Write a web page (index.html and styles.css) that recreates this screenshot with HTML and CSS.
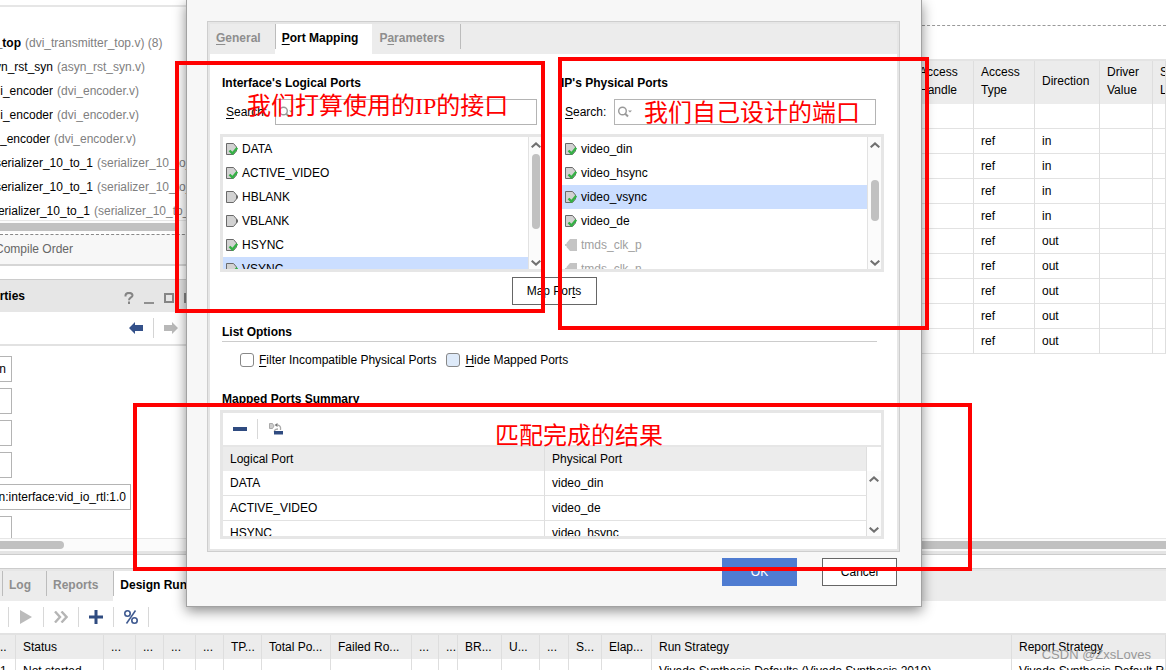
FILE: index.html
```html
<!DOCTYPE html>
<html lang="en">
<head>
<meta charset="utf-8">
<title>Port Mapping</title>
<link rel="stylesheet" href="styles.css">
</head>
<body>
<svg class="sprite" aria-hidden="true">
  <symbol id="port" viewBox="0 0 12 12"><path d="M.5 .5H7.500L10.500 4V8L7.500 11.500H.5Z" fill="#d2d2d2" stroke="#6a6a6a"/><path d="M10 4.500H12V7.500H10Z" fill="#6a6a6a"/></symbol>
  <symbol id="port-ok" viewBox="0 0 12 12"><path d="M.5 .5H7.500L10.500 4V8L7.500 11.500H.5Z" fill="#d2d2d2" stroke="#6a6a6a"/><path d="M3.500 7.500L6.500 10.500L11.300 4.800" fill="none" stroke="#35b045" stroke-width="2.400"/></symbol>
  <symbol id="port-off" viewBox="0 0 12 12"><path d="M12 0H5L1.500 4V8L5 12H12Z" fill="#c4c4c4"/><path d="M0 5H2V7H0Z" fill="#c4c4c4"/></symbol>
  <symbol id="up" viewBox="0 0 10 6"><path d="M.7 5.300L5 1.400L9.300 5.300" fill="none" stroke="#707070" stroke-width="2"/></symbol>
  <symbol id="down" viewBox="0 0 10 6"><path d="M.7 .7L5 4.600L9.300 .7" fill="none" stroke="#707070" stroke-width="2"/></symbol>
  <symbol id="lens" viewBox="0 0 14 12"><circle cx="4.500" cy="5" r="3.800" fill="none" stroke="#999" stroke-width="1.400"/><path d="M7 7.500L10 10.500" stroke="#999" stroke-width="2"/><path d="M10 4.500H14L12 6.500Z" fill="#999"/></symbol>
  <symbol id="arrow-left" viewBox="0 0 14 12"><path d="M0 6L6 0V3H14V9H6V12Z"/></symbol>
  <symbol id="arrow-right" viewBox="0 0 14 12"><path d="M14 6L8 0V3H0V9H8V12Z"/></symbol>
</svg>

<main class="app">
  <div class="workspace">
    <section class="side">
      <ul class="tree">
        <li><b class="name depth-0">_top</b><span>(dvi_transmitter_top.v) (8)</span></li>
        <li><span class="name depth-1">yn_rst_syn</span><span>(asyn_rst_syn.v)</span></li>
        <li><span class="name depth-1">i_encoder</span><span>(dvi_encoder.v)</span></li>
        <li><span class="name depth-1">i_encoder</span><span>(dvi_encoder.v)</span></li>
        <li><span class="name depth-2">_encoder</span><span>(dvi_encoder.v)</span></li>
        <li><span class="name depth-3">serializer_10_to_1</span><span>(serializer_10_to_1.v)</span></li>
        <li><span class="name depth-3">serializer_10_to_1</span><span>(serializer_10_to_1.v)</span></li>
        <li><span class="name depth-4">serializer_10_to_1</span><span>(serializer_10_to_1.v)</span></li>
      </ul>
      <div class="hscroll tree-scroll"><div class="bar bar-tree"></div></div>
      <div class="order"><span class="order-label">Compile Order</span></div>
      <header class="props-head">
        <h2 class="props-title">erties</h2>
        <div class="props-tools">
          <svg width="10" height="12" viewBox="0 0 10 12"><path d="M1.500 4.500V3.500C1.500 0 8.500 0 8.500 3.500C8.500 5.500 5 5.500 5 8.300M5 9.500V12" fill="none" stroke="#858585" stroke-width="2"/></svg>
          <svg width="10" height="12" viewBox="0 0 10 12"><path d="M0 10H10V12H0Z" fill="#909090"/></svg>
          <svg width="10" height="12" viewBox="0 0 10 12"><path d="M1 2H9V10H1Z" fill="none" stroke="#858585" stroke-width="2"/></svg>
          <svg width="10" height="12" viewBox="0 0 10 12"><path d="M1 2H9V10H1Z" fill="none" stroke="#858585" stroke-width="2"/></svg>
        </div>
      </header>
      <div class="nav">
        <button class="icon-btn nav-back" aria-label="Back"><svg width="14" height="12"><use href="#arrow-left"/></svg></button>
        <button class="icon-btn nav-next" aria-label="Forward"><svg width="14" height="12"><use href="#arrow-right"/></svg></button>
      </div>
      <form class="fields">
        <input aria-label="Name" value="n" readonly>
        <input aria-label="Mode" readonly>
        <input aria-label="Type" readonly>
        <input aria-label="Version" readonly>
        <input aria-label="Definition" class="wide" value="n:interface:vid_io_rtl:1.0" readonly>
        <input aria-label="Vendor" readonly>
      </form>
      <div class="hscroll"><div class="bar bar-props"></div></div>
    </section>

    <section class="ports">
      <table class="grid ports-table">
        <colgroup><col class="p-handle"><col class="p-type"><col class="p-dir"><col class="p-driver"><col></colgroup>
        <thead><tr><th>Access Handle</th><th>Access Type</th><th>Direction</th><th>Driver Value</th><th>Size Left</th></tr></thead>
        <tbody>
          <tr><td></td><td></td><td></td><td></td><td></td></tr>
          <tr><td></td><td>ref</td><td>in</td><td></td><td></td></tr>
          <tr><td></td><td>ref</td><td>in</td><td></td><td></td></tr>
          <tr><td></td><td>ref</td><td>in</td><td></td><td></td></tr>
          <tr><td></td><td>ref</td><td>in</td><td></td><td></td></tr>
          <tr><td></td><td>ref</td><td>out</td><td></td><td></td></tr>
          <tr><td></td><td>ref</td><td>out</td><td></td><td></td></tr>
          <tr><td></td><td>ref</td><td>out</td><td></td><td></td></tr>
          <tr><td></td><td>ref</td><td>out</td><td></td><td></td></tr>
          <tr><td></td><td>ref</td><td>out</td><td></td><td></td></tr>
        </tbody>
      </table>
      <div class="hscroll"><div class="bar"></div></div>
    </section>
  </div>

  <section class="runs">
    <nav class="tabs runs-tabs">
      <button class="tab">Log</button>
      <button class="tab">Reports</button>
      <button class="tab active">Design Runs</button>
    </nav>
    <div class="runs-tools">
      <button class="icon-btn" aria-label="Run"><svg width="12" height="14" viewBox="0 0 12 14"><path d="M0 0L12 7L0 14Z" fill="#bbb"/></svg></button>
      <button class="icon-btn" aria-label="Next step"><svg width="14" height="12" viewBox="0 0 14 12"><path d="M1 .5L6 6L1 11.500M7.500 .5L12.500 6L7.500 11.500" fill="none" stroke="#b5b5b5" stroke-width="2.400"/></svg></button>
      <button class="icon-btn" aria-label="Create runs"><svg width="14" height="14" viewBox="0 0 14 14"><path d="M7 0V14M0 7H14" stroke="#2f4b80" stroke-width="3"/></svg></button>
      <button class="icon-btn" aria-label="Show percentage"><svg width="14" height="14" viewBox="0 0 14 14"><path d="M11.500 .5L2.500 13.500" stroke="#3f5a90" stroke-width="1.500"/><circle cx="3.500" cy="3.500" r="2.700" fill="none" stroke="#3f5a90" stroke-width="1.600"/><circle cx="10.500" cy="10.500" r="2.700" fill="none" stroke="#3f5a90" stroke-width="1.600"/></svg></button>
    </div>
    <table class="grid runs-table">
      <colgroup><col class="r-first"><col class="r-status"><col class="r-32"><col class="r-28"><col class="r-32"><col class="r-28"><col class="r-38"><col class="r-power"><col class="r-failed"><col class="r-27"><col class="r-19"><col class="r-44"><col class="r-38"><col class="r-29"><col class="r-33"><col class="r-50"><col class="r-strategy"><col></colgroup>
      <thead><tr><th>..</th><th>Status</th><th>...</th><th>...</th><th>...</th><th>...</th><th>TP...</th><th>Total Po...</th><th>Failed Ro...</th><th>...</th><th>...</th><th>BR...</th><th>U...</th><th>...</th><th>S...</th><th>Elap...</th><th>Run Strategy</th><th>Report Strategy</th></tr></thead>
      <tbody><tr><td>1</td><td>Not started</td><td></td><td></td><td></td><td></td><td></td><td></td><td></td><td></td><td></td><td></td><td></td><td></td><td></td><td></td><td>Vivado Synthesis Defaults (Vivado Synthesis 2019)</td><td>Vivado Synthesis Default Reports</td></tr></tbody>
    </table>
  </section>
</main>

<div class="dialog" role="dialog" aria-label="Edit interface">
  <div class="panel">
    <nav class="tabs">
      <button class="tab"><u>G</u>eneral</button>
      <button class="tab active"><u>P</u>ort Mapping</button>
      <button class="tab">P<u>a</u>rameters</button>
      <span class="tab-end"></span>
    </nav>
    <div class="content">
      <div class="columns">
        <section class="column">
          <h3>Interface's Logical Ports</h3>
          <div class="search">
            <label for="find-logical"><u>S</u>earch:</label>
            <div class="search-box"><svg width="14" height="12"><use href="#lens"/></svg><input id="find-logical" type="text"></div>
          </div>
          <div class="frame list">
            <ul>
              <li><svg><use href="#port-ok"/></svg>DATA</li>
              <li><svg><use href="#port-ok"/></svg>ACTIVE_VIDEO</li>
              <li><svg><use href="#port"/></svg>HBLANK</li>
              <li><svg><use href="#port"/></svg>VBLANK</li>
              <li><svg><use href="#port-ok"/></svg>HSYNC</li>
              <li class="selected"><svg><use href="#port-ok"/></svg>VSYNC</li>
            </ul>
            <div class="vscroll"><svg><use href="#up"/></svg><div class="lane"><div class="thumb thumb-logical"></div></div><svg><use href="#down"/></svg></div>
          </div>
        </section>
        <section class="column">
          <h3>IP's Physical Ports</h3>
          <div class="search">
            <label for="find-physical"><u>S</u>earch:</label>
            <div class="search-box"><svg width="14" height="12"><use href="#lens"/></svg><input id="find-physical" type="text"></div>
          </div>
          <div class="frame list">
            <ul>
              <li><svg><use href="#port-ok"/></svg>video_din</li>
              <li><svg><use href="#port-ok"/></svg>video_hsync</li>
              <li class="selected"><svg><use href="#port-ok"/></svg>video_vsync</li>
              <li><svg><use href="#port-ok"/></svg>video_de</li>
              <li class="off"><svg><use href="#port-off"/></svg>tmds_clk_p</li>
              <li class="off"><svg><use href="#port-off"/></svg>tmds_clk_n</li>
            </ul>
            <div class="vscroll"><svg><use href="#up"/></svg><div class="lane"><div class="thumb thumb-physical"></div></div><svg><use href="#down"/></svg></div>
          </div>
        </section>
      </div>
      <button class="btn map">Map Por<u>t</u>s</button>
      <h3 class="ruled">List Options</h3>
      <div class="options">
        <input type="checkbox" id="filter"><label for="filter"><u>F</u>ilter Incompatible Physical Ports</label>
        <input type="checkbox" id="hide" class="hot"><label for="hide"><u>H</u>ide Mapped Ports</label>
      </div>
      <h3>Mapped Ports Summary</h3>
      <div class="frame summary">
        <div class="summary-tools">
          <button class="icon-btn" aria-label="Remove"><svg width="14" height="4"><path d="M0 0H14V4H0Z" fill="#2f4b80"/></svg></button>
          <button class="icon-btn" aria-label="Remove all"><svg width="14" height="12" viewBox="0 0 14 12"><path d="M.5 .5H3.500L5 3L3.500 5.500H.5Z" fill="#ccc" stroke="#aaa"/><path d="M8.500 0V4L5.500 2Z" fill="#777"/><path d="M8 2C11 2 12 4 11.500 7M6 10.500C4.500 8 5.500 6 9 6" fill="none" stroke="#aaa" stroke-width="1.300"/><path d="M5 8H14V11.500H5Z" fill="#2f4b80"/></svg></button>
        </div>
        <div class="summary-body">
          <table class="grid map-table">
            <thead><tr><th>Logical Port</th><th>Physical Port</th></tr></thead>
            <tbody>
              <tr><td>DATA</td><td>video_din</td></tr>
              <tr><td>ACTIVE_VIDEO</td><td>video_de</td></tr>
              <tr><td>HSYNC</td><td>video_hsync</td></tr>
            </tbody>
          </table>
          <div class="vscroll"><svg><use href="#up"/></svg><div class="lane"></div><svg><use href="#down"/></svg></div>
        </div>
      </div>
    </div>
  </div>
  <footer class="actions">
    <button class="btn primary">OK</button>
    <button class="btn">Cancel</button>
  </footer>
</div>

<div class="mark mark-logical"></div>
<div class="mark mark-physical"></div>
<div class="mark mark-result"></div>
<p class="note note-logical" lang="zh-CN">我们打算使用的<span class="latin">IP</span>的接口</p>
<p class="note note-physical" lang="zh-CN">我们自己设计的端口</p>
<p class="note note-result" lang="zh-CN">匹配完成的结果</p>
<p class="watermark">CSDN @ZxsLoves</p>
</body>
</html>
```

FILE: styles.css
```css
* { box-sizing: border-box; }

body {
  position: relative;
  margin: 0;
  height: 100vh;
  overflow: hidden;
  background: #fff;
  color: #000;
  font: 12px/24px "Liberation Sans", Arial, sans-serif;
}

ul, h2, h3, p { margin: 0; padding: 0; list-style: none; }
h2, h3 { font-size: 12px; font-weight: bold; }
button, input { margin: 0; font: inherit; color: inherit; border-radius: 0; }
button { padding: 0; border: 0; background: none; }
svg { display: block; flex: none; }
.sprite { position: absolute; width: 0; height: 0; }
u { text-underline-offset: 2px; text-decoration-skip-ink: none; }

.icon-btn { display: flex; align-items: center; justify-content: center; }

/* Shared tables */
.grid { width: 100%; border-collapse: separate; border-spacing: 0; table-layout: fixed; }
.grid th, .grid td {
  padding: 0 7px;
  border-right: 1px solid #dedede;
  font-weight: normal;
  text-align: left;
  white-space: nowrap;
  overflow: hidden;
}
.grid th { background: #ececec; }
.grid td { height: 25px; border-bottom: 1px solid #e2e2e2; }

/* Tabs */
.tabs { display: flex; background: #ececec; }
.tab {
  height: 30px;
  padding: 0 15px 2px 7px;
  color: #8e8e8e;
  font-weight: bold;
  white-space: nowrap;
  background: linear-gradient(#bcbcbc, #bcbcbc) no-repeat left top / 1px 25px;
}
.tab.active { padding-right: 14px; color: #000; background-color: #fff; }
.tab.active + .tab { background-image: none; }
.tab-end { width: 1px; height: 25px; background: #bcbcbc; }

/* Main window */
.workspace { display: grid; grid-template-columns: 200px 1fr 254px; border-bottom: 1px solid #ccc; padding-bottom: 13px; }
.side { overflow: hidden; padding-top: 5px; }
.tree { border-top: 2px solid #e6e6e6; padding-top: 24px; }
.tree li { display: flex; gap: 4px; color: #808080; white-space: nowrap; }
.name { display: flex; flex: none; justify-content: flex-end; overflow: hidden; color: #000; }
.depth-0 { width: 21px; }
.depth-1 { width: 53px; }
.depth-2 { width: 50px; }
.depth-3 { width: 93px; }
.depth-4 { width: 90px; }

.hscroll { height: 13px; padding: 2px 0; background: #fbfbfb; border-top: 1px solid #e6e6e6; }
.tree-scroll { margin-top: -3px; }
.bar { height: 8px; background: #c1c1c1; }
.bar-tree { width: 177px; }
.bar-props { width: 64px; border-radius: 0 4px 4px 0; }

.order {
  margin-top: 1px;
  border-top: 1px dashed #888;
  border-bottom: 2px solid #d6d6d6;
  padding: 2px 0 3px;
  background: #f7f7f7;
  color: #666;
}
.order-label { display: flex; justify-content: flex-end; width: 73px; white-space: nowrap; }

.props-head {
  display: flex;
  align-items: center;
  height: 33px;
  margin-top: 13px;
  border-top: 1px solid #ccc;
  background: #e6e6e6;
}
.props-title { display: flex; flex: none; justify-content: flex-end; width: 25px; overflow: hidden; }
.props-tools { display: flex; gap: 10px; margin-left: 99px; padding-top: 4px; }
.nav { display: flex; align-items: center; height: 34px; padding-left: 129px; border-bottom: 2px solid #e2e2e2; }
.nav-back { width: 25px; height: 20px; justify-content: flex-start; border-right: 1px solid #d4d4d4; fill: #34518a; }
.nav-next { margin-left: 10px; fill: #b8b8b8; }

.fields { display: flex; flex-direction: column; align-items: flex-start; gap: 6px; height: 192px; padding-top: 10px; overflow: hidden; }
.fields input {
  flex: none;
  width: 18px;
  height: 26px;
  margin-left: -6px;
  padding: 0 5px 0 0;
  border: 1px solid #b4b4b4;
  border-left: 0;
  text-align: right;
}
.fields .wide { width: 137px; padding-right: 4px; }

.side > .hscroll:last-child, .ports > .hscroll {
  height: 17px;
  border-bottom: 1px solid #ccc;
  box-shadow: inset 0 -3px #e4e4e4;
}

.ports { grid-column: 3; display: flex; flex-direction: column; padding-top: 25px; }
.ports-table { margin-bottom: auto; border-top: 2px solid #e4e4e4; }
.ports::before { content: ""; height: 33px; border-top: 1px dashed #999; }
.ports-table th { height: 43px; padding-bottom: 3px; line-height: 18px; white-space: normal; }
.p-handle { width: 62px; }
.p-type { width: 61px; }
.p-dir { width: 65px; }
.p-driver { width: 53px; }

/* Design runs */
.runs-tabs { padding-left: 2px; border-top: 2px solid #e6e6e6; }
.runs-tools { display: flex; padding: 6px 0 6px 8px; }
.runs-tools .icon-btn { width: 35px; height: 20px; border-left: 1px solid #d8d8d8; }
.runs-tools .icon-btn:last-child { width: 36px; border-right: 1px solid #d8d8d8; }
.runs-table { border-top: 2px solid #e2e2e2; }
.r-first { width: 16px; }
.r-status { width: 88px; }
.r-19 { width: 19px; }
.r-27 { width: 27px; }
.r-28 { width: 28px; }
.r-29 { width: 29px; }
.r-32 { width: 32px; }
.r-33 { width: 33px; }
.r-38 { width: 38px; }
.r-44 { width: 44px; }
.r-50 { width: 50px; }
.r-power { width: 69px; }
.r-failed { width: 81px; }
.r-strategy { width: 360px; }
.runs-table th, .runs-table td { padding-right: 0; }
.runs-table th:first-child, .runs-table td:first-child { padding: 0; }

/* Dialog */
.dialog {
  position: absolute;
  top: 0;
  left: 186px;
  width: 736px;
  padding: 21px 21px 20px 20px;
  border: 1px solid #a2a2a2;
  border-top: 0;
  background: #f7f7f7;
  box-shadow: 0 4px 12px rgba(0, 0, 0, .45);
}
.panel { border: 1px solid #cecece; box-shadow: inset 0 0 0 2px #e6e6e6; padding: 2px; }
.dialog .tab:first-child { padding-left: 6px; padding-right: 14px; background-image: none; }
.content { display: flex; flex-direction: column; padding: 17px 13px 10px 10px; background: #fff; }
.content h3 { padding-left: 2px; }
.columns { display: grid; grid-template-columns: 1fr 1fr; gap: 14px; }
.search { display: flex; align-items: center; gap: 7px; padding: 4px 8px 9px 6px; }
.search label { flex: none; width: 42px; }
.search-box { display: flex; flex: 1; align-items: center; height: 26px; padding-left: 3px; border: 1px solid #b4b4b4; background: #fff; }
.search-box input { flex: 1; min-width: 0; border: 0; outline: 0; background: none; }

.frame { border: 3px solid #e6e6e6; }
.list { display: flex; height: 138px; }
.list ul { flex: 1; overflow: hidden; }
.list li { display: flex; align-items: center; gap: 4px; padding-left: 3px; }
.list li svg { width: 12px; height: 12px; }
.list .selected { background: #cbdeff; }
.list .off { color: #a0a0a0; }

.vscroll { display: flex; flex: none; flex-direction: column; align-items: center; width: 14px; padding: 5px 0 3px; border-left: 1px solid #e2e2e2; background: #fbfbfb; }
.vscroll svg { width: 10px; height: 6px; }
.lane { flex: 1; width: 8px; }
.thumb { border-radius: 4px; background: #c1c1c1; }
.thumb-logical { height: 75px; margin-top: 6px; }
.thumb-physical { height: 41px; margin-top: 32px; }

.btn { width: 75px; height: 28px; border: 1px solid #666; background: #fff; }
.map { align-self: center; width: 85px; margin: 5px 0 15px 4px; }
.content .ruled { height: 22px; margin: 0 7px 0 2px; padding: 0; border-bottom: 1px solid #ccc; }
.options { display: flex; align-items: center; padding: 6px 0 15px 20px; }
.options label { margin: 0 10px 0 5px; }
.options input { width: 14px; height: 14px; appearance: none; border: 1px solid #888; border-radius: 3px; background: #fff; }
.options .hot { background: #deeaf9; }

.summary { height: 129px; margin-top: -1px; }
.summary-tools { display: flex; align-items: center; height: 34px; border-bottom: 2px solid #e6e6e6; }
.summary-tools .icon-btn { width: 35px; height: 20px; }
.summary-tools .icon-btn:first-child { border-right: 1px solid #d8d8d8; }
.summary-body { display: flex; height: 89px; overflow: hidden; }
.map-table { flex: 1; align-self: flex-start; }
.summary-body .vscroll { margin-top: 24px; border-left: 0; }

.actions { display: flex; justify-content: flex-end; gap: 25px; padding: 6px 3px 0 0; }
.primary { border-color: #4f7cd1; background: #4f7cd1; color: #fff; }

/* Hand-drawn annotations over the window */
.mark { position: absolute; border: 4px solid #f00; }
.mark-logical { left: 175px; top: 61px; width: 370px; height: 252px; }
.mark-physical { left: 558px; top: 57px; width: 371px; height: 273px; }
.mark-result { left: 133px; top: 403px; width: 839px; height: 168px; }
.note { position: absolute; color: #f00; font: 24px/30px "Noto Sans CJK SC", sans-serif; white-space: nowrap; }
.latin { font-family: "Liberation Serif", serif; }
.note-logical { left: 247px; top: 89px; }
.note-physical { left: 644px; top: 96px; }
.note-result { left: 495px; top: 419px; }
.watermark { position: absolute; right: 15px; top: 643px; color: #999; font-size: 13px; }
```
